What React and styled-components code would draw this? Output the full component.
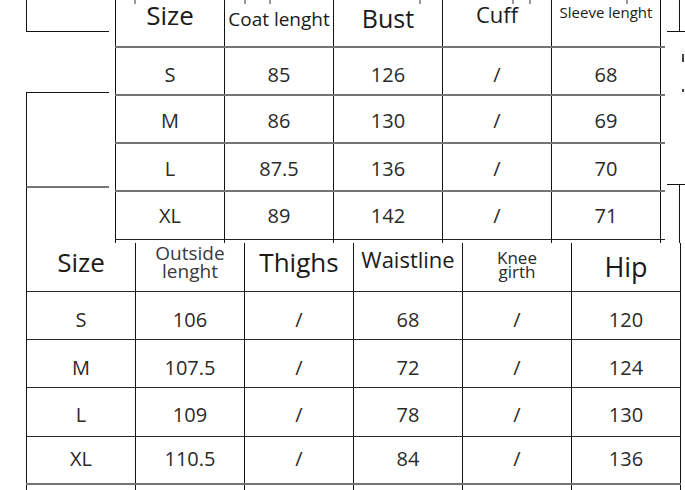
import styled, { createGlobalStyle } from "styled-components";

const Global = createGlobalStyle`
  html, body {
    margin: 0;
    padding: 0;
    background: #fff;
  }
`;

const Page = styled.div`
  width: 685px;
  height: 490px;
  overflow: hidden;
  display: flex;
  flex-direction: column;
  background: #fff;
  font-family: "Open Sans", "Noto Sans", sans-serif;
  color: #1c1c1c;
`;

const TopBand = styled.div`
  display: flex;
  height: 243px;
  flex: none;
`;

const LeftGutter = styled.div`
  width: 115px;
  flex: none;
  box-sizing: border-box;
  padding-left: 26px;
  display: flex;
  flex-direction: column;
`;

const Fence = styled.div`
  width: 83px;
  box-sizing: border-box;
  height: ${(p) => (p.$h ? `${p.$h}px` : "auto")};
  flex: ${(p) => (p.$h ? "none" : "1")};
  margin-top: ${(p) => p.$mt || 0}px;
  border-left: 1.5px solid #111;
  border-top: ${(p) => p.$top || "none"};
  border-bottom: ${(p) => p.$bottom || "none"};
`;

const TopTable = styled.div`
  width: 550px;
  flex: none;
  position: relative;
  display: flex;
  flex-direction: column;
`;

const Ticks = styled.svg`
  position: absolute;
  top: 0;
  left: 0;
`;

const Row = styled.div`
  display: flex;
  height: ${(p) => (p.$h ? `${p.$h}px` : "auto")};
  flex: ${(p) => (p.$h ? "none" : "1")};
  box-sizing: border-box;
  border-bottom: ${(p) => p.$line || "none"};
`;

const Cell = styled.div`
  width: 109px;
  flex: none;
  border-right: 1px solid #111;
  display: flex;
  justify-content: center;
  align-items: center;
  font-size: 20px;
  line-height: 1;
  color: #2a2a2a;
  padding-top: ${(p) => Math.max(p.$dy || 0, 0) * 2}px;
  padding-bottom: ${(p) => Math.max(-(p.$dy || 0), 0) * 2}px;
  box-sizing: border-box;
  &:first-child {
    width: 110px;
    border-left: 1px solid #111;
  }
`;

const HeadCell = styled(Cell)`
  align-items: flex-start;
  text-align: center;
  white-space: nowrap;
  font-size: ${(p) => p.$fs}px;
  line-height: ${(p) => p.$lh || p.$fs}px;
  padding-top: ${(p) => p.$pt}px;
  padding-bottom: 0;
  color: ${(p) => p.$color || "#1a1a1a"};
`;

const RightGutter = styled.div`
  width: 20px;
  flex: none;
  display: flex;
  flex-direction: column;
`;

const Bracket = styled.div`
  margin-left: 2px;
  width: 18px;
  display: flex;
  height: ${(p) => (p.$h ? `${p.$h}px` : "auto")};
  flex: ${(p) => (p.$h ? "none" : "1")};
  margin-top: ${(p) => p.$mt || 0}px;
  box-sizing: border-box;
  border-top: ${(p) => p.$top || "none"};
  border-bottom: ${(p) => p.$bottom || "none"};
`;

const Stem = styled.div`
  width: 13px;
  box-sizing: border-box;
  border-right: 1.5px solid #111;
`;

const Mark = styled.div`
  margin-left: 17px;
  margin-top: ${(p) => p.$mt}px;
  width: 2px;
  height: ${(p) => p.$h}px;
  background: #444;
`;

const BottomTable = styled.div`
  margin-left: 26px;
  width: 655px;
  flex: 1;
  display: flex;
  flex-direction: column;
`;

const grayLine = "2px solid #747474";
const darkLine = "1.5px solid #2a2a2a";

const topHead = [
  { t: "Size", fs: 26, pt: 2 },
  { t: "Coat lenght", fs: 19, pt: 10 },
  { t: "Bust", fs: 25, pt: 6 },
  { t: "Cuff", fs: 22, pt: 3 },
  { t: "Sleeve lenght", fs: 15, pt: 5 },
];

const topRows = [
  { c: ["S", "85", "126", "/", "68"], dy: 4 },
  { c: ["M", "86", "130", "/", "69"], dy: 2 },
  { c: ["L", "87.5", "136", "/", "70"], dy: 2 },
  { c: ["XL", "89", "142", "/", "71"], dy: 0 },
];

const bottomHead = [
  { t: "Size", fs: 26, pt: 6 },
  { t: ["Outside", "lenght"], fs: 19, lh: 18, pt: 1, color: "#3a3a3a" },
  { t: "Thighs", fs: 26, pt: 6 },
  { t: "Waistline", fs: 22, pt: 5 },
  { t: ["Knee", "girth"], fs: 17, lh: 14, pt: 8, color: "#2a2a2a" },
  { t: "Hip", fs: 27, pt: 10 },
];

const bottomRows = [
  { c: ["S", "106", "/", "68", "/", "120"], h: 48, dy: 4 },
  { c: ["M", "107.5", "/", "72", "/", "124"], h: 48, dy: 4 },
  { c: ["L", "109", "/", "78", "/", "130"], h: 49, dy: 3 },
  { c: ["XL", "110.5", "/", "84", "/", "136"], h: 48, dy: -1 },
];

function Label({ t }) {
  if (Array.isArray(t)) {
    return (
      <span>
        {t[0]}
        <br />
        {t[1]}
      </span>
    );
  }
  return <span>{t}</span>;
}

export default function App() {
  return (
    <Page>
      <Global />
      <TopBand>
        <LeftGutter>
          <Fence $h={32} $bottom="1.5px solid #111" />
          <Fence $h={94} $mt={60} $top="1.5px solid #111" />
          <Fence $top="2px solid #777" />
        </LeftGutter>

        <TopTable>
          <Ticks width="550" height="5">
            {[20, 130, 155, 305, 398, 415, 512].map((x) => (
              <line key={x} x1={x} y1="0" x2={x} y2="4" stroke="#555" strokeWidth="1.2" />
            ))}
          </Ticks>
          <Row $h={48} $line={grayLine}>
            {topHead.map((h) => (
              <HeadCell key={h.t} $fs={h.fs} $pt={h.pt}>
                <Label t={h.t} />
              </HeadCell>
            ))}
          </Row>
          {topRows.map((r, i) => (
            <Row key={i} $h={48} $line={i === 3 ? "1.5px solid #222" : grayLine}>
              {r.c.map((v, j) => (
                <Cell key={j} $dy={r.dy}>
                  {v}
                </Cell>
              ))}
            </Row>
          ))}
          <Row>
            {topHead.map((h) => (
              <Cell key={h.t} />
            ))}
          </Row>
        </TopTable>

        <RightGutter>
          <Bracket $h={32} $bottom="1.5px solid #111">
            <Stem />
          </Bracket>
          <Mark $mt={22} $h={8} />
          <Mark $mt={27} $h={3} />
          <Bracket $mt={92} $top="1.5px solid #111">
            <Stem />
          </Bracket>
        </RightGutter>
      </TopBand>

      <BottomTable>
        <Row $h={49} $line={darkLine}>
          {bottomHead.map((h, i) => (
            <HeadCell key={i} $fs={h.fs} $lh={h.lh} $pt={h.pt} $color={h.color}>
              <Label t={h.t} />
            </HeadCell>
          ))}
        </Row>
        {bottomRows.map((r, i) => (
          <Row key={i} $h={r.h} $line={i === 3 ? grayLine : darkLine}>
            {r.c.map((v, j) => (
              <Cell key={j} $dy={r.dy}>
                {v}
              </Cell>
            ))}
          </Row>
        ))}
        <Row>
          {bottomHead.map((h, i) => (
            <Cell key={i} />
          ))}
        </Row>
      </BottomTable>
    </Page>
  );
}
